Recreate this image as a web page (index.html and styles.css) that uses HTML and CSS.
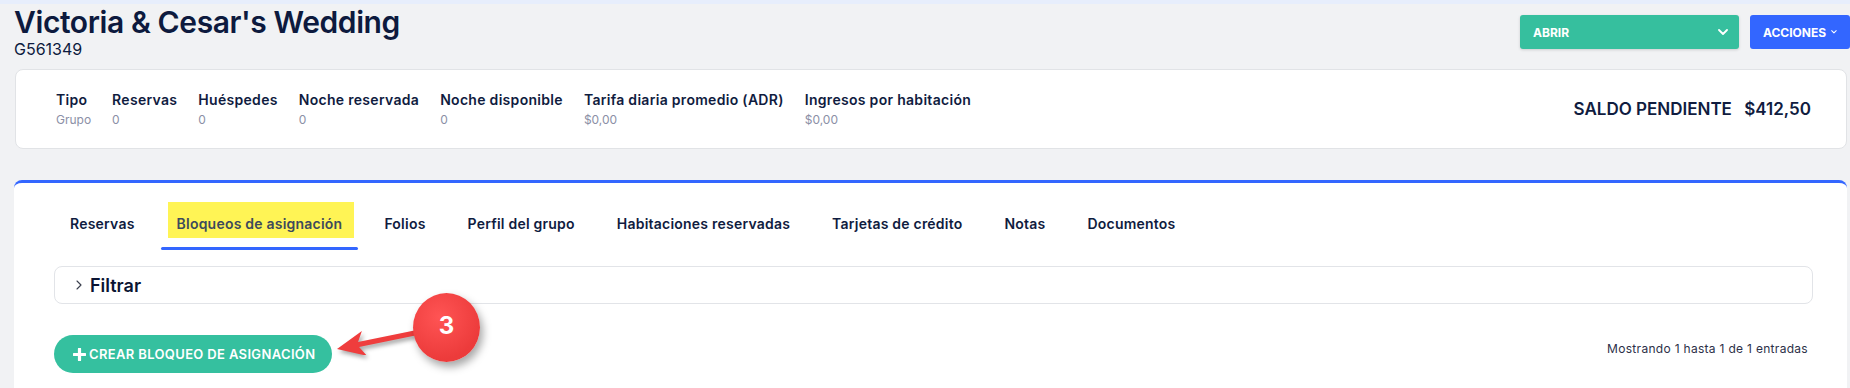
FILE: index.html
```html
<!DOCTYPE html>
<html lang="es">
<head>
    <meta charset="UTF-8">
    <meta name="viewport" content="width=device-width, initial-scale=1.0">
    <title>Victoria &amp; Cesar's Wedding</title>
    <link rel="stylesheet" href="styles.css">
</head>
<body>
    <div class="topline"></div>

    <header class="page-head">
        <div class="title-block">
            <h1>Victoria &amp; Cesar's Wedding</h1>
            <div class="code">G561349</div>
        </div>
        <div class="head-actions">
            <button class="btn-open">
                ABRIR
                <svg width="10" height="6" viewBox="0 0 10 6"><path d="M1 1l4 4 4-4" fill="none" stroke="#fff" stroke-width="1.8" stroke-linecap="round" stroke-linejoin="round"/></svg>
            </button>
            <button class="btn-actions">
                ACCIONES
                <svg width="9" height="6" viewBox="0 0 9 6"><path d="M1 1l3.5 3.5L8 1" fill="none" stroke="#fff" stroke-width="1.6" stroke-linecap="round" stroke-linejoin="round"/></svg>
            </button>
        </div>
    </header>

    <section class="stats-card">
        <div class="stats">
            <div class="stat"><div class="stat-label">Tipo</div><div class="stat-value">Grupo</div></div>
            <div class="stat"><div class="stat-label">Reservas</div><div class="stat-value">0</div></div>
            <div class="stat"><div class="stat-label">Huéspedes</div><div class="stat-value">0</div></div>
            <div class="stat"><div class="stat-label">Noche reservada</div><div class="stat-value">0</div></div>
            <div class="stat"><div class="stat-label">Noche disponible</div><div class="stat-value">0</div></div>
            <div class="stat"><div class="stat-label">Tarifa diaria promedio (ADR)</div><div class="stat-value">$0,00</div></div>
            <div class="stat"><div class="stat-label">Ingresos por habitación</div><div class="stat-value">$0,00</div></div>
        </div>
        <div class="balance">SALDO PENDIENTE <span class="balance-amount">$412,50</span></div>
    </section>

    <section class="tab-card">
        <nav class="tabs">
            <a class="tab">Reservas</a>
            <a class="tab active"><span class="mark">Bloqueos de asignación</span></a>
            <a class="tab">Folios</a>
            <a class="tab">Perfil del grupo</a>
            <a class="tab">Habitaciones reservadas</a>
            <a class="tab">Tarjetas de crédito</a>
            <a class="tab">Notas</a>
            <a class="tab">Documentos</a>
        </nav>

        <div class="filter">
            <svg width="6" height="10" viewBox="0 0 6 10"><path d="M1 1l4 4-4 4" fill="none" stroke="#3a3f4d" stroke-width="1.1" stroke-linecap="round" stroke-linejoin="round"/></svg>
            Filtrar
        </div>

        <div class="list-bar">
            <button class="btn-create">
                <svg width="13" height="13" viewBox="0 0 13 13"><path d="M6.5 1v11M1 6.5h11" stroke="#fff" stroke-width="3.2" stroke-linecap="round"/></svg>
                CREAR BLOQUEO DE ASIGNACIÓN
            </button>

            <!-- annotation: arrow + step number -->
            <svg class="callout-arrow" width="120" height="70" viewBox="0 0 120 70">
                <g transform="translate(13 64) rotate(-11.6)">
                    <polygon points="0,0 28,-12.7 22,-2.6 92,-2.6 92,2.6 22,2.6 28,12.7" fill="#ef3d3d"/>
                </g>
            </svg>
            <div class="callout-badge">3</div>

            <div class="entries">Mostrando 1 hasta 1 de 1 entradas</div>
        </div>
    </section>
</body>
</html>
```

FILE: styles.css
```css
body {
    margin: 0;
    background-color: #f1f2f4;
    font-family: Inter, "Open Sans", sans-serif;
    color: #101c3f;
    overflow: hidden;
}

.topline {
    height: 4px;
    background-color: #e7eefc;
}

.page-head {
    display: flex;
    justify-content: space-between;
    padding-left: 14px;
    height: 65px;
}

.page-head h1 {
    margin: 0;
    font-size: 30px;
    line-height: 36px;
    font-weight: 600;
    letter-spacing: -0.4px;
    color: #0d1a3e;
}

.code {
    margin-top: -1px;
    font-size: 16px;
    line-height: 20px;
    color: #0d1a3e;
}

.head-actions {
    display: flex;
    gap: 11px;
    padding-top: 11px;
}

.head-actions button {
    display: flex;
    align-items: center;
    height: 34px;
    border: none;
    border-radius: 3px;
    color: #fff;
    font-family: inherit;
    font-size: 12px;
    font-weight: 700;
    cursor: pointer;
}

.btn-open {
    width: 219px;
    justify-content: space-between;
    padding: 0 11px 0 13px;
    background-color: #36bf9e;
    box-shadow: 0 1px 3px rgba(0, 0, 0, 0.15);
}

.btn-actions {
    width: 100px;
    gap: 5px;
    padding: 0 13px;
    background-color: #3366ff;
}

.stats-card {
    display: flex;
    justify-content: space-between;
    align-items: center;
    margin: 0 3px 0 15px;
    padding: 20px 35px 20px 40px;
    background-color: #fff;
    border: 1px solid #e1e3e6;
    border-radius: 8px;
}

.stats {
    display: flex;
    gap: 21px;
}

.stat-label {
    font-size: 14px;
    line-height: 20px;
    font-weight: 600;
    letter-spacing: 0.3px;
}

.stat-value {
    margin-top: 2px;
    font-size: 12px;
    line-height: 16px;
    color: #8b8fa6;
}

.balance {
    font-size: 17px;
    font-weight: 600;
}

.balance-amount {
    margin-left: 8px;
}

.tab-card {
    margin: 31px 3px 0 14px;
    padding: 0 34px 40px 40px;
    background-color: #fff;
    border-top: 3px solid #3366ff;
    border-radius: 8px 8px 0 0;
}

.tabs {
    display: flex;
    gap: 10px;
    padding-top: 31px;
}

.tab {
    position: relative;
    padding: 0 16px 16px;
    font-size: 14px;
    line-height: 20px;
    font-weight: 600;
    letter-spacing: 0.22px;
    color: #101c3f;
    cursor: pointer;
}

.tab.active {
    color: #3d4a5c;
}

.tab.active::after {
    content: "";
    position: absolute;
    left: 0;
    right: 0;
    bottom: 0;
    height: 3px;
    border-radius: 2px;
    background-color: #3366ff;
}

.mark {
    background-color: #fff455;
    padding: 13px 12px 6px 9px;
    margin: 0 -12px 0 -9px;
}

.filter {
    display: flex;
    align-items: center;
    gap: 8px;
    height: 38px;
    box-sizing: border-box;
    margin-top: 16px;
    padding-left: 21px;
    border: 1px solid #e2e4e8;
    border-radius: 8px;
    font-size: 18px;
    font-weight: 600;
    color: #0a1433;
}

.list-bar {
    position: relative;
    display: flex;
    justify-content: space-between;
    align-items: center;
    margin-top: 31px;
    padding-right: 5px;
}

.btn-create {
    display: flex;
    align-items: center;
    gap: 3px;
    width: 278px;
    height: 38px;
    padding: 0 0 0 19px;
    border: none;
    border-radius: 19px;
    background-color: #35c09f;
    color: #fff;
    font-family: inherit;
    font-size: 13px;
    font-weight: 600;
    letter-spacing: 0.35px;
    cursor: pointer;
}

.callout-arrow {
    position: absolute;
    left: 270px;
    top: -50px;
    filter: drop-shadow(2px 3px 2px rgba(0, 0, 0, 0.35));
}

.callout-badge {
    position: absolute;
    left: 359px;
    top: -42px;
    width: 67px;
    height: 69px;
    display: flex;
    align-items: center;
    justify-content: center;
    padding-bottom: 4px;
    box-sizing: border-box;
    border-radius: 50%;
    background: radial-gradient(circle at 40% 35%, #ff5454, #ec3b3b 70%);
    box-shadow: 3px 5px 8px rgba(0, 0, 0, 0.35);
    color: #fff;
    font-size: 24px;
    font-weight: 700;
}

.entries {
    margin-bottom: 11px;
    font-size: 12px;
    letter-spacing: 0.3px;
    color: #2d3048;
}
```
